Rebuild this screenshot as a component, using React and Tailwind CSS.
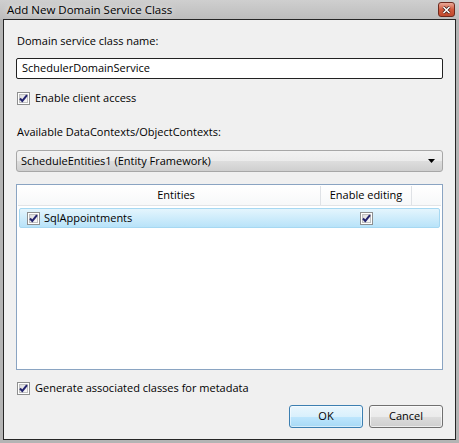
import React from "react";

// Win7-style checkbox, 13px
function Check({ checked = true }) {
  return (
    <span className="inline-flex w-[13px] h-[13px] shrink-0 border border-[#8e8f8f] bg-white p-[1px]">
      <span className="relative flex w-full h-full items-center justify-center border border-[#c0c0c0] bg-gradient-to-br from-[#dcdcdc] to-[#fafafa]">
        {checked && (
          <svg width="9" height="9" viewBox="0 0 9 9" className="absolute">
            <path d="M1 4.5 L3.3 7 L8 1.2" fill="none" stroke="#23236e" strokeWidth="2" />
          </svg>
        )}
      </span>
    </span>
  );
}

function CloseButton() {
  return (
    <div className="flex w-[17px] h-[15px] items-center justify-center rounded-[3px] border border-[#6e2a1e] bg-gradient-to-b from-[#e9a999] via-[#d25a3e] to-[#c14a2e]">
      <svg width="9" height="8" viewBox="0 0 9 8">
        <path d="M1.5 1 L7.5 7 M7.5 1 L1.5 7" stroke="#3a1a14" strokeWidth="3" />
        <path d="M1.5 1 L7.5 7 M7.5 1 L1.5 7" stroke="#ffffff" strokeWidth="1.6" />
      </svg>
    </div>
  );
}

export default function App() {
  return (
    <div
      className="w-[459px] h-[443px] flex flex-col bg-[#b4b4b4] text-[11px] text-black"
      style={{ fontFamily: '"Open Sans", "Noto Sans", sans-serif' }}
    >
      {/* Title bar */}
      <div className="h-[19px] shrink-0 flex items-center justify-between pl-[7px] pr-[4px] bg-gradient-to-b from-[#cfcfcf] to-[#bdbdbd]">
        <span className="text-[11.5px] leading-none [text-shadow:0_0_6px_#ffffff]">
          Add New Domain Service Class
        </span>
        <CloseButton />
      </div>

      {/* Client area */}
      <div className="flex-1 mx-[3px] mb-[3px] border border-[#262626] bg-[#f0f0f0] flex flex-col px-[12px]">
        <div className="mt-[13px] h-[16px] leading-[16px] pl-[1px]">Domain service class name:</div>

        <div className="mt-[9px] h-[21px] border border-[#222] rounded-[2px] bg-white flex items-center pl-[5px]">
          SchedulerDomainService
        </div>

        <div className="mt-[13px] h-[13px] flex items-center gap-[5px] pl-[1px]">
          <Check />
          <span>Enable client access</span>
        </div>

        <div className="mt-[19px] h-[16px] leading-[16px] pl-[1px]">Available DataContexts/ObjectContexts:</div>

        <div className="mt-[10px] h-[22px] border border-[#a7a7a7] rounded-[3px] flex items-center justify-between pl-[4px] pr-[7px] bg-[linear-gradient(to_bottom,#f2f2f2_0%,#ebebeb_50%,#dddddd_51%,#cfcfcf_100%)]">
          <span>ScheduleEntities1 (Entity Framework)</span>
          <svg width="7" height="4" viewBox="0 0 7 4">
            <path d="M0 0 H7 L3.5 4 Z" fill="#000" />
          </svg>
        </div>

        {/* List view */}
        <div className="mt-[12px] h-[186px] border border-[#8aa4c2] bg-white flex flex-col p-[1px]">
          <div className="h-[20px] flex border-b border-[#e2e4e7] bg-gradient-to-b from-white to-[#f7f8f9]">
            <div className="w-[303px] flex items-center justify-center border-r border-[#dfe2e6] pl-[14px]">Entities</div>
            <div className="w-[91px] flex items-center justify-center border-r border-[#dfe2e6]">Enable editing</div>
            <div className="flex-1" />
          </div>
          <div className="mt-[2px] mx-[1px] h-[20px] flex items-center rounded-[2px] border border-[#a6d8f2] bg-gradient-to-b from-[#e4f5fd] to-[#b8e3f9]">
            <div className="w-[301px] flex items-center gap-[4px] pl-[7px]">
              <Check />
              <span>SqlAppointments</span>
            </div>
            <div className="w-[91px] flex justify-center">
              <Check />
            </div>
          </div>
        </div>

        <div className="mt-[12px] h-[13px] flex items-center gap-[5px] pl-[1px]">
          <Check />
          <span>Generate associated classes for metadata</span>
        </div>

        <div className="mt-[10px] flex justify-end gap-[6px]">
          <div className="w-[74px] h-[23px] rounded-[3px] border border-[#3c7fb1] flex items-center justify-center bg-[linear-gradient(to_bottom,#eaf6fd_0%,#d9f0fc_50%,#bee6fd_51%,#a7d9f5_100%)] shadow-[inset_0_0_0_1px_#ffffff80]">
            OK
          </div>
          <div className="w-[74px] h-[23px] rounded-[3px] border border-[#707070] flex items-center justify-center bg-[linear-gradient(to_bottom,#f2f2f2_0%,#ebebeb_50%,#dddddd_51%,#cfcfcf_100%)] shadow-[inset_0_0_0_1px_#ffffffa0]">
            Cancel
          </div>
        </div>
      </div>
    </div>
  );
}
